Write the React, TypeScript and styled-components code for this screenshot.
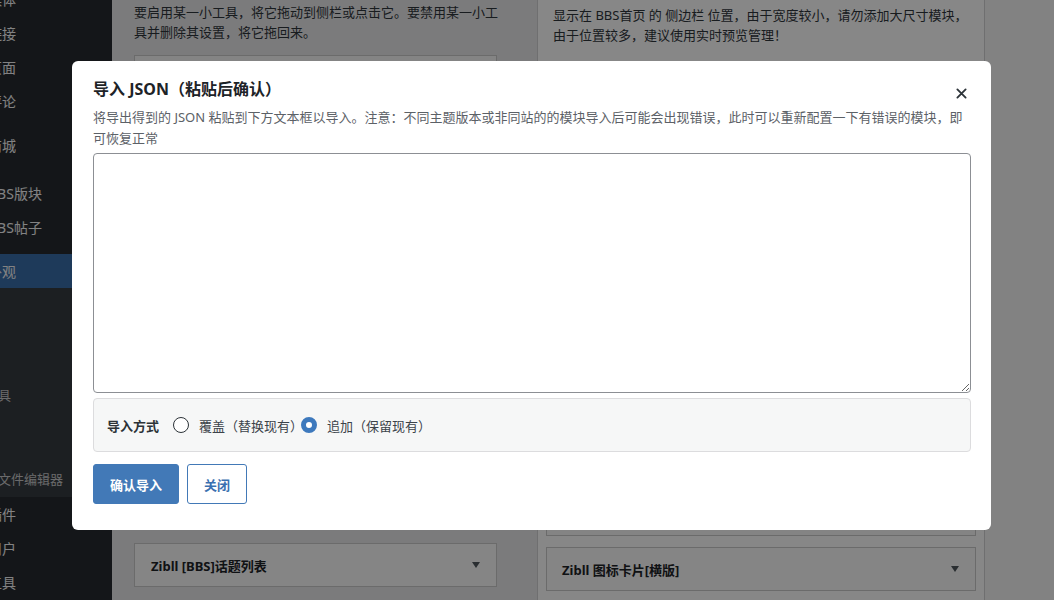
import styled, { createGlobalStyle } from 'styled-components';

const GlobalStyle = createGlobalStyle`
    html, body {
        margin: 0;
        padding: 0;
    }
    body {
        font-family: "Noto Sans", "Noto Sans CJK SC", sans-serif;
        background: #f5f5f5;
        overflow: hidden;
    }
`;

const Page = styled.div`
    display: flex;
    height: 600px;
    overflow: hidden;
`;

const Sidebar = styled.nav`
    width: 112px;
    flex-shrink: 0;
    background: #262b30;
    overflow: hidden;
    display: flex;
    flex-direction: column;
`;

const MenuItem = styled.div<{ $gap?: number; $active?: boolean }>`
    height: 34px;
    flex-shrink: 0;
    display: flex;
    align-items: center;
    margin-top: ${p => p.$gap ?? 0}px;
    background: ${p => (p.$active ? '#3a6eaa' : 'transparent')};
    color: #f6f6f7;
    font-size: 14px;
    white-space: nowrap;
`;

const MenuLabel = styled.span`
    margin-left: -12px;
`;

const SubMenu = styled.div`
    background: #363b40;
    padding: 8px 0 5px;
    display: flex;
    flex-direction: column;
`;

const SubItem = styled.div`
    height: 28px;
    display: flex;
    align-items: center;
    font-size: 13px;
    color: #c8c9cb;
    white-space: nowrap;
`;

const SubLabel = styled.span`
    margin-left: -28px;
`;

const Content = styled.div`
    flex: 1;
    display: flex;
`;

const LeftCol = styled.section`
    width: 425px;
    flex-shrink: 0;
    background: #e9e9ea;
    padding: 2px 40px 0 22px;
    box-sizing: border-box;
    display: flex;
    flex-direction: column;
`;

const RightCol = styled.section`
    width: 448px;
    flex-shrink: 0;
    background: #fff;
    border-left: 1px solid #d2d2d4;
    border-right: 1px solid #d2d2d4;
    padding: 5px 8px 0;
    box-sizing: border-box;
    display: flex;
    flex-direction: column;
`;

const Intro = styled.p<{ $indent?: number }>`
    margin: 0;
    padding-left: ${p => p.$indent ?? 0}px;
    font-size: 13px;
    line-height: 20px;
    color: #2f353b;
    white-space: nowrap;
`;

const WidgetArea = styled.div<{ $top: number; $height: number }>`
    margin-top: ${p => p.$top}px;
    height: ${p => p.$height}px;
    flex-shrink: 0;
    border: 1px solid #cbcbcb;
    background: #fafafa;
    box-sizing: border-box;
`;

const Widget = styled.div<{ $top: number; $pl: number }>`
    margin-top: ${p => p.$top}px;
    height: 44px;
    flex-shrink: 0;
    box-sizing: border-box;
    border: 1px solid #cbcbcb;
    background: #fbfbfb;
    display: flex;
    align-items: center;
    justify-content: space-between;
    padding: 0 16px 0 ${p => p.$pl}px;
    font-size: 13px;
    font-weight: 700;
    color: #1d2327;
`;

const Caret = styled.span`
    width: 0;
    height: 0;
    border-left: 4px solid transparent;
    border-right: 4px solid transparent;
    border-top: 6px solid #50575e;
`;

const Overlay = styled.div`
    position: fixed;
    inset: 0;
    background: rgba(0, 0, 0, 0.47);
    padding: 61px 0 0 72px;
`;

const Modal = styled.div`
    width: 919px;
    box-sizing: border-box;
    background: #fff;
    border-radius: 6px;
    padding: 16px 20px 26px 21px;
`;

const Header = styled.div`
    display: flex;
    justify-content: space-between;
    align-items: flex-start;
    height: 24px;
`;

const Title = styled.h2`
    margin: 0;
    font-size: 16px;
    line-height: 24px;
    font-weight: 700;
    color: #1d2327;
`;

const CloseButton = styled.button`
    width: 20px;
    height: 20px;
    margin-top: 6px;
    padding: 0;
    border: 0;
    background: transparent;
    display: flex;
    align-items: center;
    justify-content: center;
    color: #2c3338;
    cursor: pointer;
`;

const Desc = styled.p`
    margin: 6px 0 0;
    font-size: 13px;
    line-height: 21px;
    color: #5c6167;
    white-space: nowrap;
`;

const JsonInput = styled.textarea`
    display: block;
    margin-top: 4px;
    width: 100%;
    height: 240px;
    box-sizing: border-box;
    border: 1px solid #8c8f94;
    border-radius: 4px;
    background: #fff;
`;

const Options = styled.div`
    margin-top: 5px;
    height: 54px;
    box-sizing: border-box;
    background: #f6f7f7;
    border: 1px solid #dcdcde;
    border-radius: 4px;
    padding: 0 13px;
    display: flex;
    align-items: center;
    font-size: 13px;
    color: #3c434a;
`;

const OptionsLabel = styled.span`
    font-weight: 700;
    color: #2c3338;
    margin-right: 14px;
`;

const Radio = styled.span<{ $checked?: boolean }>`
    width: 16px;
    height: 16px;
    box-sizing: border-box;
    border-radius: 50%;
    border: ${p => (p.$checked ? '5px solid #3d79bd' : '1px solid #2c3338')};
    background: #fff;
    flex-shrink: 0;
`;

const RadioText = styled.span`
    margin-left: 10px;
    margin-right: -2px;
`;

const Actions = styled.div`
    margin-top: 12px;
    display: flex;
    gap: 8px;
`;

const Button = styled.button<{ $primary?: boolean }>`
    height: 40px;
    padding: 0 16px;
    border-radius: 3px;
    border: 1px solid #4279b7;
    background: ${p => (p.$primary ? '#4279b7' : '#fff')};
    color: ${p => (p.$primary ? '#fff' : '#3a70b0')};
    font-family: "Noto Sans", "Noto Sans CJK SC", sans-serif;
    font-size: 13px;
    font-weight: 700;
    cursor: pointer;
`;

const mainTop = [
    { label: '媒体', gap: -18 },
    { label: '链接', gap: 0 },
    { label: '页面', gap: 0 },
    { label: '评论', gap: 0 },
    { label: '商城', gap: 10 },
    { label: 'BBS版块', gap: 14 },
    { label: 'BBS帖子', gap: 0 },
];

const subItems = ['主题', '菜单', '自定', '小工具', '背景', '顶部', '主题文件编辑器'];

const mainBottom = ['插件', '用户', '工具'];

const App = () => {
    return (
        <>
            <GlobalStyle />
            <Page>
                <Sidebar>
                    {mainTop.map(item => (
                        <MenuItem key={item.label} $gap={item.gap}>
                            <MenuLabel>{item.label}</MenuLabel>
                        </MenuItem>
                    ))}
                    <MenuItem $gap={10} $active>
                        <MenuLabel>外观</MenuLabel>
                    </MenuItem>
                    <SubMenu>
                        {subItems.map(label => (
                            <SubItem key={label}>
                                <SubLabel>{label}</SubLabel>
                            </SubItem>
                        ))}
                    </SubMenu>
                    {mainBottom.map(label => (
                        <MenuItem key={label}>
                            <MenuLabel>{label}</MenuLabel>
                        </MenuItem>
                    ))}
                </Sidebar>
                <Content>
                    <LeftCol>
                        <Intro>
                            要启用某一小工具，将它拖动到侧栏或点击它。要禁用某一小工
                            <br />
                            具并删除其设置，将它拖回来。
                        </Intro>
                        <WidgetArea $top={13} $height={470} />
                        <Widget $top={18} $pl={16}>
                            <span>Zibll [BBS]话题列表</span>
                            <Caret />
                        </Widget>
                    </LeftCol>
                    <RightCol>
                        <Intro $indent={7}>
                            显示在 BBS首页 的 侧边栏 位置，由于宽度较小，请勿添加大尺寸模块，
                            <br />
                            由于位置较多，建议使用实时预览管理！
                        </Intro>
                        <WidgetArea $top={17} $height={474} />
                        <Widget $top={11} $pl={15}>
                            <span>Zibll 图标卡片[横版]</span>
                            <Caret />
                        </Widget>
                    </RightCol>
                </Content>
            </Page>
            <Overlay>
                <Modal>
                    <Header>
                        <Title>导入 JSON（粘贴后确认）</Title>
                        <CloseButton aria-label="关闭">
                            <svg width="11" height="11" viewBox="0 0 12 12">
                                <path d="M1.5 1.5 L10.5 10.5 M10.5 1.5 L1.5 10.5" stroke="currentColor" strokeWidth="2" strokeLinecap="round" />
                            </svg>
                        </CloseButton>
                    </Header>
                    <Desc>
                        将导出得到的 JSON 粘贴到下方文本框以导入。注意：不同主题版本或非同站的的模块导入后可能会出现错误，此时可以重新配置一下有错误的模块，即
                        <br />
                        可恢复正常
                    </Desc>
                    <JsonInput />
                    <Options>
                        <OptionsLabel>导入方式</OptionsLabel>
                        <Radio />
                        <RadioText>覆盖（替换现有）</RadioText>
                        <Radio $checked />
                        <RadioText>追加（保留现有）</RadioText>
                    </Options>
                    <Actions>
                        <Button $primary>确认导入</Button>
                        <Button>关闭</Button>
                    </Actions>
                </Modal>
            </Overlay>
        </>
    );
};

export default App;
